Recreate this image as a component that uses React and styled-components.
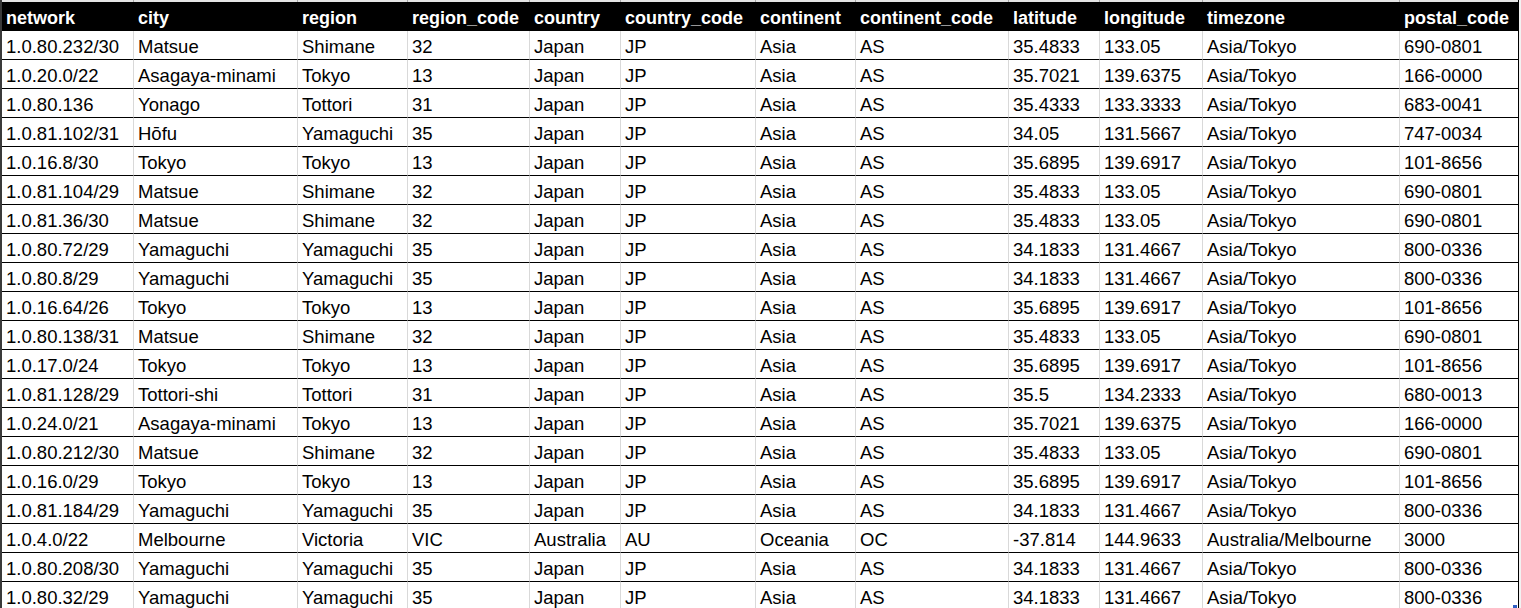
import React from 'react';
import styled, { createGlobalStyle } from 'styled-components';

const Global = createGlobalStyle`
  html, body { margin: 0; padding: 0; background: #f2f2f2; }
  body { font-family: "Liberation Sans", Arial, sans-serif; color: #000; overflow: hidden; }
`;

const Sheet = styled.div`
  position: relative;
  width: 1519px;
  height: 608px;
  overflow: hidden;
  background: #fff;
  border-left: 2px solid #3a3a3a;
  box-sizing: border-box;
`;

const Grid = styled.table`
  table-layout: fixed;
  border-collapse: separate;
  border-spacing: 0;
  width: 1517px;

  td, th {
    box-sizing: border-box;
    padding: 0 0 0 4px;
    white-space: nowrap;
    overflow: hidden;
    text-align: left;
    vertical-align: top;
  }
  td + td, th + th { border-left: 1px solid #d9d9d9; }
  td:last-child, th:last-child { border-right: 1px solid #000; }
`;

const EdgeRow = styled.tr`
  td {
    height: 2px;
    padding: 0;
    background: #e4e4e4;
  }
  td + td { border-left-color: #a8a8a8; }
`;

const HeadCell = styled.th`
  height: 29px;
  background: #000;
  color: #fff;
  font-weight: 700;
  font-size: 18px;
  line-height: 26px;
  padding-top: 3px !important;
  th + & { border-left-color: #000 !important; }
`;

const Cell = styled.td`
  height: 29px;
  font-size: 18.5px;
  line-height: 25px;
  padding-top: 3px !important;
  border-bottom: 1px solid #000;
`;

const FillHandle = styled.span`
  position: absolute;
  right: 2px;
  bottom: 0;
  width: 4px;
  height: 3px;
  background: #2f5fc4;
`;

const columns = [
  ['network', 131],
  ['city', 164],
  ['region', 110],
  ['region_code', 122],
  ['country', 91],
  ['country_code', 135],
  ['continent', 100],
  ['continent_code', 153],
  ['latitude', 91],
  ['longitude', 103],
  ['timezone', 197],
  ['postal_code', 120],
];

const matsue = ['Matsue', 'Shimane', '32', 'Japan', 'JP', 'Asia', 'AS', '35.4833', '133.05', 'Asia/Tokyo', '690-0801'];
const tokyo = ['Tokyo', 'Tokyo', '13', 'Japan', 'JP', 'Asia', 'AS', '35.6895', '139.6917', 'Asia/Tokyo', '101-8656'];
const asagaya = ['Asagaya-minami', 'Tokyo', '13', 'Japan', 'JP', 'Asia', 'AS', '35.7021', '139.6375', 'Asia/Tokyo', '166-0000'];
const yamaguchi = ['Yamaguchi', 'Yamaguchi', '35', 'Japan', 'JP', 'Asia', 'AS', '34.1833', '131.4667', 'Asia/Tokyo', '800-0336'];

const rows = [
  ['1.0.80.232/30', ...matsue],
  ['1.0.20.0/22', ...asagaya],
  ['1.0.80.136', 'Yonago', 'Tottori', '31', 'Japan', 'JP', 'Asia', 'AS', '35.4333', '133.3333', 'Asia/Tokyo', '683-0041'],
  ['1.0.81.102/31', 'Hōfu', 'Yamaguchi', '35', 'Japan', 'JP', 'Asia', 'AS', '34.05', '131.5667', 'Asia/Tokyo', '747-0034'],
  ['1.0.16.8/30', ...tokyo],
  ['1.0.81.104/29', ...matsue],
  ['1.0.81.36/30', ...matsue],
  ['1.0.80.72/29', ...yamaguchi],
  ['1.0.80.8/29', ...yamaguchi],
  ['1.0.16.64/26', ...tokyo],
  ['1.0.80.138/31', ...matsue],
  ['1.0.17.0/24', ...tokyo],
  ['1.0.81.128/29', 'Tottori-shi', 'Tottori', '31', 'Japan', 'JP', 'Asia', 'AS', '35.5', '134.2333', 'Asia/Tokyo', '680-0013'],
  ['1.0.24.0/21', ...asagaya],
  ['1.0.80.212/30', ...matsue],
  ['1.0.16.0/29', ...tokyo],
  ['1.0.81.184/29', ...yamaguchi],
  ['1.0.4.0/22', 'Melbourne', 'Victoria', 'VIC', 'Australia', 'AU', 'Oceania', 'OC', '-37.814', '144.9633', 'Australia/Melbourne', '3000'],
  ['1.0.80.208/30', ...yamaguchi],
  ['1.0.80.32/29', ...yamaguchi],
];

export default function App() {
  return (
    <>
      <Global />
      <Sheet>
        <Grid>
          <colgroup>
            {columns.map(([name, w]) => <col key={name} style={{ width: w }} />)}
          </colgroup>
          <thead>
            <EdgeRow>
              {columns.map(([name]) => <td key={name} />)}
            </EdgeRow>
            <tr>
              {columns.map(([name]) => <HeadCell key={name}>{name}</HeadCell>)}
            </tr>
          </thead>
          <tbody>
            {rows.map((r, i) => (
              <tr key={i}>
                {r.map((v, j) => <Cell key={j}>{v}</Cell>)}
              </tr>
            ))}
          </tbody>
        </Grid>
        <FillHandle />
      </Sheet>
    </>
  );
}
